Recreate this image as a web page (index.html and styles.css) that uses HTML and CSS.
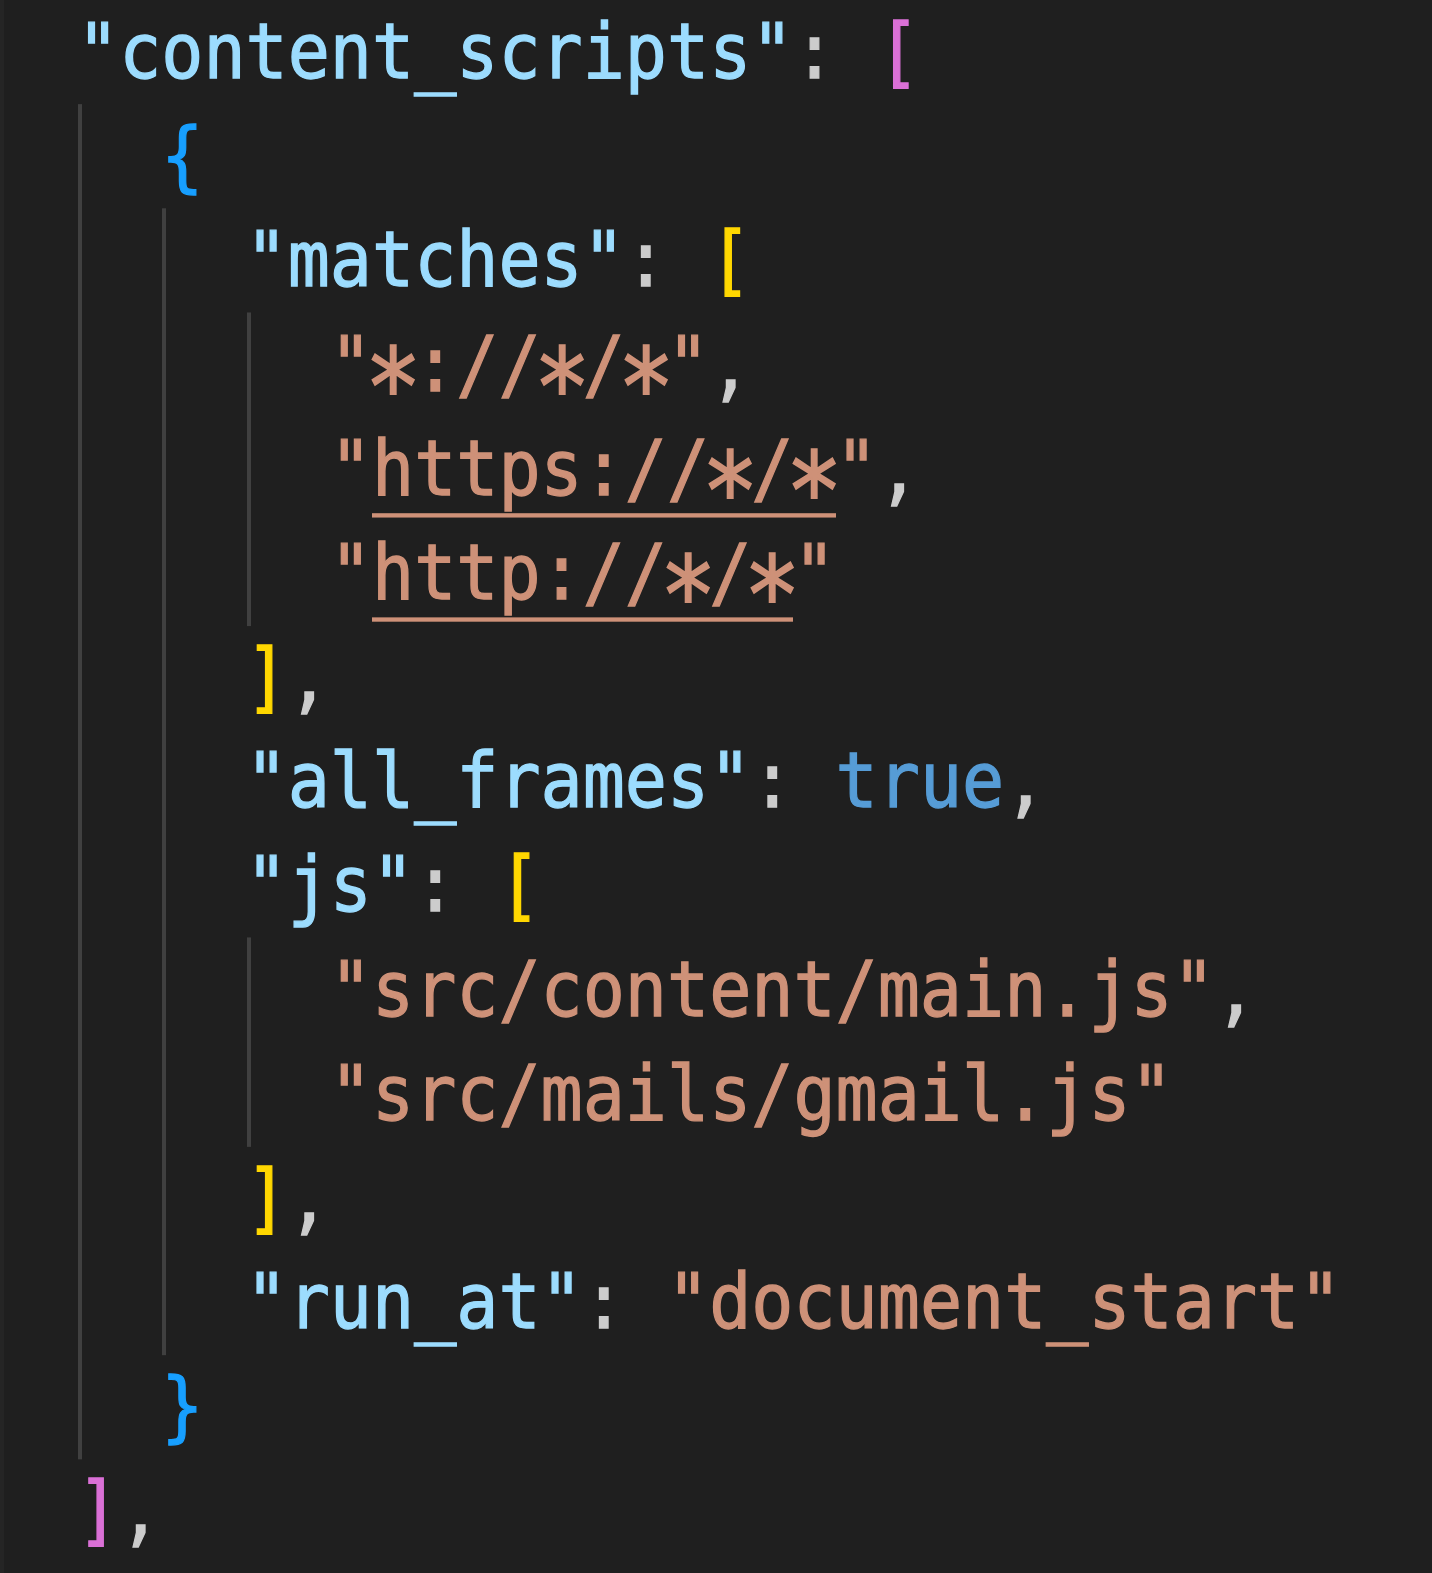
FILE: index.html
```html
<!DOCTYPE html>
<html>
<head>
<meta charset="utf-8">
<link rel="stylesheet" href="styles.css">
</head>
<body>
<div class="editor">
  <div class="code">
    <div class="ln"><span class="k">"content_scripts"</span><span class="p">: </span><span class="b2">[</span></div>
    <div class="ln"><span class="g"></span><span class="b3">{</span></div>
    <div class="ln"><span class="g"></span><span class="g"></span><span class="k">"matches"</span><span class="p">: </span><span class="b1">[</span></div>
    <div class="ln"><span class="g"></span><span class="g"></span><span class="g"></span><span class="s">"<span class="a">*</span>://<span class="a">*</span>/<span class="a">*</span>"</span><span class="p">,</span></div>
    <div class="ln"><span class="g"></span><span class="g"></span><span class="g"></span><span class="s">"<span class="u">https://<span class="a">*</span>/<span class="a">*</span></span>"</span><span class="p">,</span></div>
    <div class="ln"><span class="g"></span><span class="g"></span><span class="g"></span><span class="s">"<span class="u">http://<span class="a">*</span>/<span class="a">*</span></span>"</span></div>
    <div class="ln"><span class="g"></span><span class="g"></span><span class="b1">]</span><span class="p">,</span></div>
    <div class="ln"><span class="g"></span><span class="g"></span><span class="k">"all_frames"</span><span class="p">: </span><span class="c">true</span><span class="p">,</span></div>
    <div class="ln"><span class="g"></span><span class="g"></span><span class="k">"js"</span><span class="p">: </span><span class="b1">[</span></div>
    <div class="ln"><span class="g"></span><span class="g"></span><span class="g"></span><span class="s">"src/content/main.js"</span><span class="p">,</span></div>
    <div class="ln"><span class="g"></span><span class="g"></span><span class="g"></span><span class="s">"src/mails/gmail.js"</span></div>
    <div class="ln"><span class="g"></span><span class="g"></span><span class="b1">]</span><span class="p">,</span></div>
    <div class="ln"><span class="g"></span><span class="g"></span><span class="k">"run_at"</span><span class="p">: </span><span class="s">"document_start"</span></div>
    <div class="ln"><span class="g"></span><span class="b3">}</span></div>
    <div class="ln"><span class="b2">]</span><span class="p">,</span></div>
  </div>
</div>
</body>
</html>
```
FILE: styles.css
```css
html, body {
  margin: 0;
  padding: 0;
  background: #1f1f1f;
}
.editor {
  box-sizing: border-box;
  width: 1432px;
  height: 1573px;
  background: #1f1f1f;
  border-left: 4px solid #252525;
  overflow: hidden;
}
.code {
  padding-left: 73px;
  font-family: "DejaVu Sans Mono", monospace;
  font-size: 70px;
  line-height: 96px;
  color: #cccccc;
  -webkit-text-stroke: 1.2px currentColor;
  transform: scaleY(1.085);
  transform-origin: 0 0;
}
.ln {
  white-space: pre;
  height: 96px;
}
.g {
  display: inline-block;
  width: 2ch;
  height: 97px;
  vertical-align: top;
  background: linear-gradient(#404040, #404040) no-repeat 1px 0 / 4px 100%;
}
.k { color: #9cdcfe; }
.s { color: #ce9178; }
.c { color: #569cd6; }
.p { color: #cccccc; }
.b1 { color: #ffd700; }
.b2 { color: #da70d6; }
.b3 { color: #179fff; }
.a {
  display: inline-block;
  width: 1ch;
  line-height: 40px;
  transform: translateY(22px) scale(1.35, 1.4);
}
.u {
  border-bottom: 4px solid #ce9178;
}
```
